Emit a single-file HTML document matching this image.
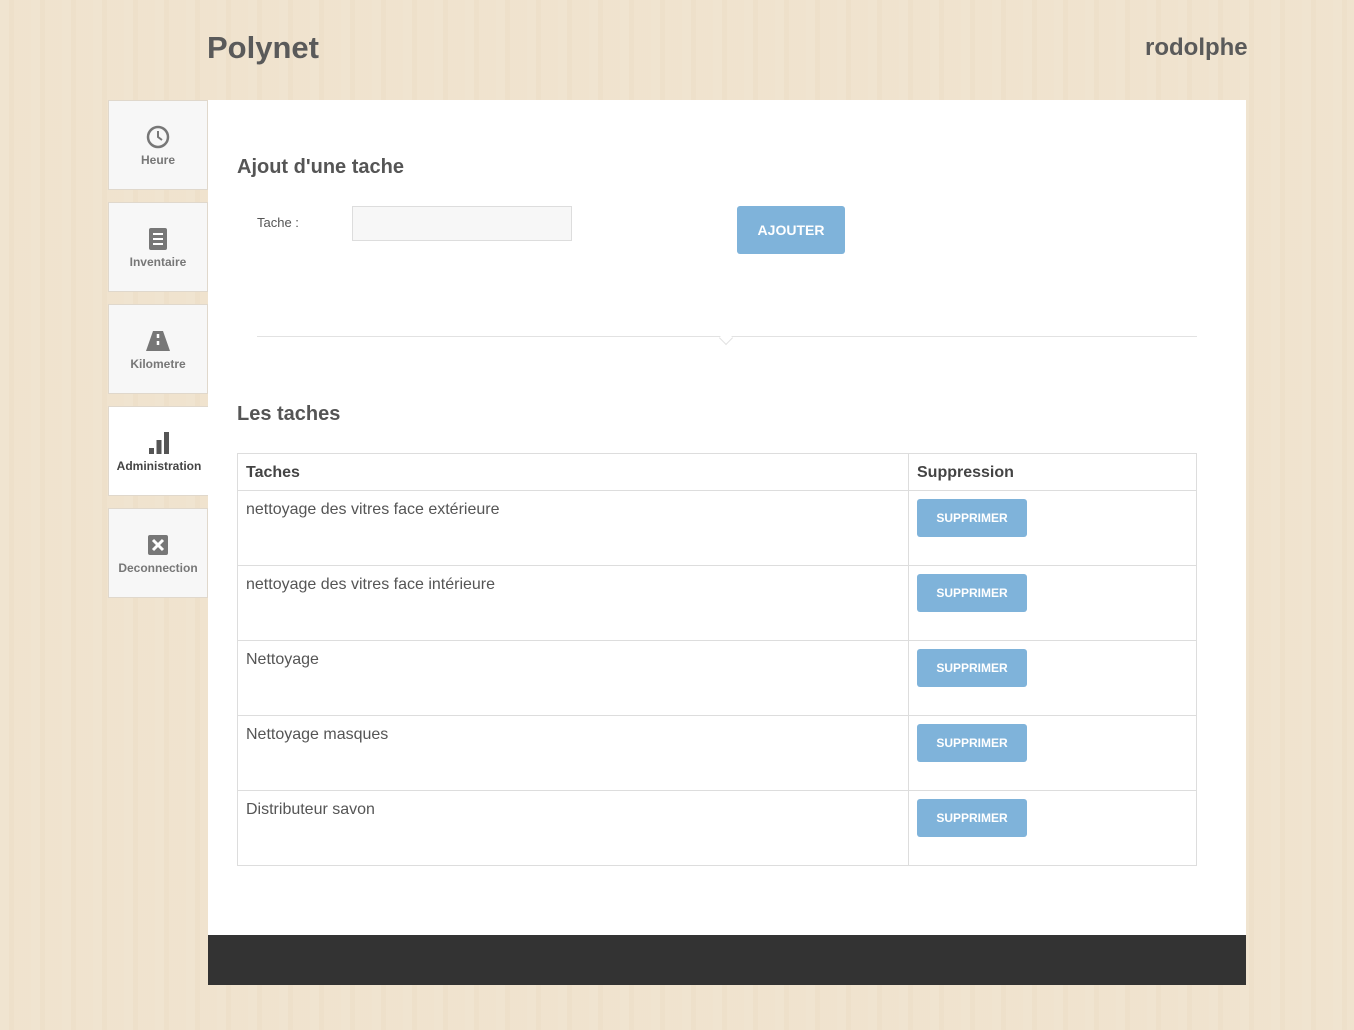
<!DOCTYPE html>
<html><head><meta charset="utf-8"><style>
*{box-sizing:border-box;margin:0;padding:0}
body{width:1354px;height:1030px;overflow:hidden;font-family:"Liberation Sans",sans-serif;color:#555;
background:#efe2cd;background-image:repeating-linear-gradient(90deg,rgba(255,255,255,.06) 0 9px,rgba(200,170,130,.04) 9px 14px,rgba(255,255,255,.03) 14px 31px);position:relative}
.abs{position:absolute}
.logo{left:207px;top:30px;font-size:31px;font-weight:bold;color:#5a5a5a}
.user{left:1145px;top:34px;font-size:24px;font-weight:bold;color:#5a5a5a}
.tab{position:absolute;left:108px;width:100px;height:90px;background:#f7f7f7;border:1px solid #e0d8cc;text-align:center;font-size:12px;font-weight:bold;color:#777}
.tab.on{background:#fff;color:#444;border-right:none;width:101px}
.tab svg{display:block;margin:24px auto 4px}
.main{left:208px;top:100px;width:1038px;height:835px;background:#fff}
.foot{left:208px;top:935px;width:1038px;height:50px;background:#333}
h2{position:absolute;font-size:20px;font-weight:bold;color:#555}
.btn{position:absolute;background:#7fb3da;color:#fff;font-weight:bold;border-radius:3px;text-align:center}
table{position:absolute;left:237px;top:453px;width:960px;border-collapse:collapse;font-size:16px}
td,th{border:1px solid #ddd;text-align:left;vertical-align:top;padding:8px 8px}
th{height:37px;font-weight:bold;color:#444;padding-top:10px}
td{height:75px;padding-top:10px}
td .b{position:static;display:inline-block;width:110px;height:38px;line-height:38px;font-size:12px;margin-top:-2px}
</style></head><body>
<div class="abs logo">Polynet</div>
<div class="abs user">rodolphe</div>
<div class="tab" style="top:100px"><svg width="24" height="24" viewBox="0 0 24 24"><circle cx="12" cy="12" r="10" fill="none" stroke="#777" stroke-width="2.5"/><path d="M12 6v6l4 3" fill="none" stroke="#777" stroke-width="2"/></svg>Heure</div>
<div class="tab" style="top:202px"><svg width="18" height="24" viewBox="0 0 18 24"><rect x="0" y="1" width="18" height="22" rx="2" fill="#777"/><path d="M4 7h10M4 12h10M4 17h10" stroke="#fff" stroke-width="2"/></svg>Inventaire</div>
<div class="tab" style="top:304px"><svg width="24" height="24" viewBox="0 0 24 24"><path d="M7 2h10l7 20H0z" fill="#777"/><path d="M12 5v4M12 12v4" stroke="#fff" stroke-width="2.5"/></svg>Kilometre</div>
<div class="tab on" style="top:406px"><svg width="22" height="24" viewBox="0 0 22 24"><rect x="1" y="17" width="5" height="6" fill="#555"/><rect x="8.5" y="9" width="5" height="14" fill="#555"/><rect x="16" y="1" width="5" height="22" fill="#555"/></svg>Administration</div>
<div class="tab" style="top:508px"><svg width="22" height="24" viewBox="0 0 22 24"><rect x="1" y="2" width="20" height="20" rx="2" fill="#777"/><path d="M6 7l10 10M16 7L6 17" stroke="#fff" stroke-width="3"/></svg>Deconnection</div>
<div class="abs main"></div>
<div class="abs foot"></div>
<h2 style="left:237px;top:156px">Ajout d'une tache</h2>
<div class="abs" style="left:257px;top:215px;font-size:13px;color:#555">Tache :</div>
<div class="abs" style="left:352px;top:206px;width:220px;height:35px;background:#f7f7f7;border:1px solid #ddd"></div>
<div class="btn" style="left:737px;top:206px;width:108px;height:48px;line-height:48px;font-size:14px">AJOUTER</div>
<div class="abs" style="left:257px;top:336px;width:940px;height:1px;background:#e2e2e2"></div>
<div class="abs" style="left:721px;top:333px;width:10px;height:10px;background:#fff;border-right:1px solid #e2e2e2;border-bottom:1px solid #e2e2e2;transform:rotate(45deg)"></div>
<h2 style="left:237px;top:403px">Les taches</h2>
<table>
<tr><th style="width:671px">Taches</th><th>Suppression</th></tr>
<tr><td>nettoyage des vitres face extérieure</td><td><div class="btn b">SUPPRIMER</div></td></tr>
<tr><td>nettoyage des vitres face intérieure</td><td><div class="btn b">SUPPRIMER</div></td></tr>
<tr><td>Nettoyage</td><td><div class="btn b">SUPPRIMER</div></td></tr>
<tr><td>Nettoyage masques</td><td><div class="btn b">SUPPRIMER</div></td></tr>
<tr><td>Distributeur savon</td><td><div class="btn b">SUPPRIMER</div></td></tr>
</table>
</body></html>
